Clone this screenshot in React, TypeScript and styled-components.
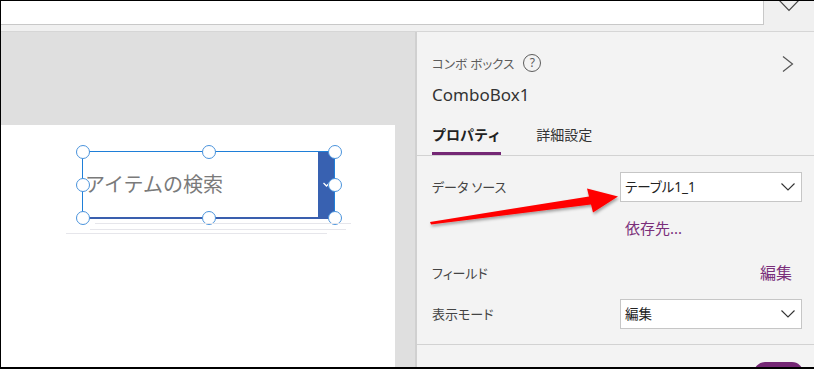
import * as React from 'react';
import styled, { createGlobalStyle } from 'styled-components';

const GlobalStyle = createGlobalStyle`
    html, body {
        margin: 0;
        padding: 0;
        background: #ffffff;
    }
    body {
        font-family: "Noto Sans", "Noto Sans CJK JP", sans-serif;
    }
    * {
        box-sizing: border-box;
    }
`;

const uiFont = `"Noto Sans", "Noto Sans CJK JP", sans-serif`;
const purple = '#742774';

const Frame = styled.div`
    position: relative;
    width: 814px;
    height: 369px;
    border-top: 1px solid #000;
    border-left: 1px solid #000;
    border-bottom: 2px solid #000;
    overflow: hidden;
    display: flex;
    flex-direction: column;
    background: #f3f3f3;
`;

const TopBar = styled.div`
    flex: none;
    height: 31px;
    display: flex;
    background: #f0f0f0;
    border-bottom: 1px solid #d6d6d6;
`;

const FormulaBox = styled.div`
    width: 763px;
    height: 24px;
    background: #ffffff;
    border-right: 1px solid #c8c8c8;
    border-bottom: 1px solid #c8c8c8;
`;

const ExpandButton = styled.div`
    flex: 1;
    display: flex;
    justify-content: center;
    align-items: flex-start;
    svg {
        margin-top: -2px;
    }
`;

const Main = styled.div`
    flex: 1;
    min-height: 0;
    display: flex;
`;

const Canvas = styled.div`
    width: 416px;
    flex: none;
    display: flex;
    flex-direction: column;
    padding-top: 93px;
    background: #dfdfdf;
    border-right: 2px solid #d0d0d0;
`;

const Screen = styled.div`
    position: relative;
    width: 394px;
    flex: 1;
    background: #ffffff;
    padding: 26px 0 0 81px;
`;

const GhostLine = styled.div<{ $top: number; $left: number; $width: number }>`
    position: absolute;
    top: ${p => p.$top}px;
    left: ${p => p.$left}px;
    width: ${p => p.$width}px;
    height: 1px;
    background: #e6e6eb;
`;

const ComboWrap = styled.div`
    position: relative;
    width: 253px;
    height: 68px;
`;

const Combo = styled.div`
    display: flex;
    height: 100%;
    border: 1px solid #1f7fd8;
    border-bottom: 2px solid #3a5fae;
    background: #ffffff;
`;

const Placeholder = styled.div`
    flex: 1;
    display: flex;
    align-items: center;
    padding: 0 0 2px 2px;
    font-family: "Noto Sans CJK JP", sans-serif;
    font-size: 20px;
    color: #7a7a7a;
    white-space: nowrap;
`;

const DropButton = styled.div`
    width: 16px;
    display: flex;
    align-items: center;
    justify-content: center;
    background: #3861b1;
`;

const Handle = styled.div<{ $x: number; $y: number }>`
    position: absolute;
    left: ${p => p.$x - 7}px;
    top: ${p => p.$y - 7}px;
    width: 14px;
    height: 14px;
    border-radius: 50%;
    background: #ffffff;
    border: 1.5px solid #4a93dc;
`;

const Panel = styled.div`
    flex: 1;
    display: flex;
    flex-direction: column;
    background: #f3f3f3;
    font-family: ${uiFont};
    font-feature-settings: "palt";
`;

const Header = styled.div`
    display: flex;
    justify-content: space-between;
    align-items: flex-start;
    padding: 20px 20px 0 15px;
    > svg {
        margin-top: 4px;
    }
`;

const HeaderText = styled.div`
    display: flex;
    flex-direction: column;
`;

const TypeRow = styled.div`
    display: flex;
    align-items: center;
    gap: 9px;
    height: 22px;
`;

const TypeLabel = styled.span`
    font-size: 12.5px;
    color: #5c5c5c;
`;

const HelpIcon = styled.span`
    width: 18px;
    height: 18px;
    border: 1px solid #5c5c5c;
    border-radius: 50%;
    display: flex;
    align-items: center;
    justify-content: center;
    font-size: 12px;
    line-height: 1;
    color: #5c5c5c;
`;

const ControlName = styled.div`
    margin-top: 9px;
    font-size: 17px;
    line-height: 24px;
    color: #333333;
`;

const Tabs = styled.div`
    display: flex;
    gap: 35px;
    margin-top: 18px;
    padding-left: 15px;
    border-bottom: 1px solid #d2d2d2;
`;

const Tab = styled.div<{ $active?: boolean }>`
    font-size: 14px;
    line-height: 20px;
    padding-bottom: 7px;
    font-feature-settings: normal;
    color: ${p => (p.$active ? '#222222' : '#333333')};
    font-weight: ${p => (p.$active ? 700 : 400)};
    border-bottom: 3px solid ${p => (p.$active ? purple : 'transparent')};
`;

const Props = styled.div`
    display: flex;
    flex-direction: column;
    padding: 16px 12px 15px 15px;
    border-bottom: 1px solid #d2d2d2;
`;

const PropRow = styled.div<{ $gap?: number }>`
    display: flex;
    align-items: center;
    justify-content: space-between;
    min-height: 20px;
    line-height: 20px;
    margin-top: ${p => p.$gap || 0}px;
`;

const Label = styled.span`
    font-size: 13px;
    color: #444444;
`;

const Select = styled.div`
    width: 182px;
    height: 30px;
    display: flex;
    align-items: center;
    justify-content: space-between;
    padding: 0 6px 0 4px;
    background: #ffffff;
    border: 1px solid #c6c6c6;
    font-size: 13.5px;
    color: #222222;
`;

const LinkCell = styled.div`
    width: 182px;
    padding-left: 5px;
`;

const Link = styled.span<{ $size?: number; $pad?: number }>`
    font-size: ${p => p.$size || 15}px;
    line-height: 20px;
    color: #7a2e7a;
    margin-right: ${p => p.$pad || 0}px;
`;

const ToggleSection = styled.div`
    display: flex;
    justify-content: flex-end;
    padding: 17px 11px 0 0;
`;

const Toggle = styled.div`
    width: 49px;
    height: 22px;
    border-radius: 11px;
    background: ${purple};
`;

const Annotation = styled.svg`
    position: absolute;
    left: -1px;
    top: -1px;
    pointer-events: none;
`;

const ChevronDown = ({ color = '#333' }: { color?: string }) => (
    <svg width="14" height="8" viewBox="0 0 14 8">
        <path d="M0.5 0.5 L7 7 L13.5 0.5" fill="none" stroke={color} strokeWidth="1.1" />
    </svg>
);

const handles = [
    [0.5, 0.5],
    [126.5, 0.5],
    [253, 0.5],
    [0.5, 34],
    [253, 34],
    [0.5, 67],
    [126.5, 67],
    [253, 67],
];

export default function App() {
    return (
        <Frame>
            <GlobalStyle />
            <TopBar>
                <FormulaBox />
                <ExpandButton>
                    <svg width="24" height="14" viewBox="0 0 24 14">
                        <path d="M1 0 L12 11.5 L23 0" fill="none" stroke="#444" strokeWidth="1.2" />
                    </svg>
                </ExpandButton>
            </TopBar>
            <Main>
                <Canvas>
                    <Screen>
                        <ComboWrap>
                            <Combo>
                                <Placeholder>アイテムの検索</Placeholder>
                                <DropButton>
                                    <svg width="7" height="5" viewBox="0 0 7 5">
                                        <path d="M0.5 1 L3.5 4 L6.5 1" fill="none" stroke="#fff" strokeWidth="1.3" />
                                    </svg>
                                </DropButton>
                            </Combo>
                            {handles.map(([x, y], i) => (
                                <Handle key={i} $x={x} $y={y} />
                            ))}
                        </ComboWrap>
                        <GhostLine $top={98} $left={94} $width={256} />
                        <GhostLine $top={104} $left={89} $width={256} />
                        <GhostLine $top={108} $left={65} $width={261} />
                    </Screen>
                </Canvas>
                <Panel>
                    <Header>
                        <HeaderText>
                            <TypeRow>
                                <TypeLabel>コンボ ボックス</TypeLabel>
                                <HelpIcon>?</HelpIcon>
                            </TypeRow>
                            <ControlName>ComboBox1</ControlName>
                        </HeaderText>
                        <svg width="12" height="16" viewBox="0 0 12 16">
                            <path d="M1 0.5 L10.5 8 L1 15.5" fill="none" stroke="#555" strokeWidth="1.2" />
                        </svg>
                    </Header>
                    <Tabs>
                        <Tab $active>プロパティ</Tab>
                        <Tab>詳細設定</Tab>
                    </Tabs>
                    <Props>
                        <PropRow>
                            <Label>データ ソース</Label>
                            <Select>
                                <span>テーブル1_1</span>
                                <ChevronDown />
                            </Select>
                        </PropRow>
                        <PropRow $gap={16}>
                            <span />
                            <LinkCell>
                                <Link>依存先...</Link>
                            </LinkCell>
                        </PropRow>
                        <PropRow $gap={25}>
                            <Label>フィールド</Label>
                            <Link $size={16} $pad={10}>編集</Link>
                        </PropRow>
                        <PropRow $gap={16}>
                            <Label>表示モード</Label>
                            <Select>
                                <span>編集</span>
                                <ChevronDown />
                            </Select>
                        </PropRow>
                    </Props>
                    <ToggleSection>
                        <Toggle />
                    </ToggleSection>
                </Panel>
            </Main>
            <Annotation width="814" height="369" viewBox="0 0 814 369">
                <defs>
                    <filter id="arrowShadow" x="-10%" y="-50%" width="120%" height="200%">
                        <feDropShadow dx="1" dy="2" stdDeviation="1.5" floodColor="#000" floodOpacity="0.35" />
                    </filter>
                </defs>
                <polygon
                    points="430,222 589,196.5 587,188.5 618,196.5 593,212.5 591,204.5 431,224.5"
                    fill="#ff0000"
                    filter="url(#arrowShadow)"
                />
            </Annotation>
        </Frame>
    );
}
